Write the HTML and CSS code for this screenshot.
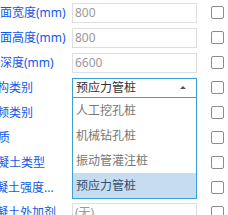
FILE: index.html
```html
<!DOCTYPE html>
<html lang="zh">

<head>
  <meta charset="UTF-8" />
  <title>桩属性</title>
  <link rel="stylesheet" href="styles.css">
</head>

<body>
  <div class="props">
    <div class="row">
      <div class="label"><span class="shift-12">截面宽度(mm)</span></div>
      <div class="field">800</div>
      <span class="check"></span>
    </div>
    <div class="row">
      <div class="label"><span class="shift-12">截面高度(mm)</span></div>
      <div class="field">800</div>
      <span class="check"></span>
    </div>
    <div class="row">
      <div class="label"><span class="shift-12">桩深度(mm)</span></div>
      <div class="field">6600</div>
      <span class="check"></span>
    </div>
    <div class="row">
      <div class="label"><span class="shift-15">结构类别</span></div>
      <div class="select">
        <div class="select-head">预应力管桩<span class="arrow"></span></div>
        <ul class="select-list">
          <li>人工挖孔桩</li>
          <li>机械钻孔桩</li>
          <li>振动管灌注桩</li>
          <li class="active">预应力管桩</li>
        </ul>
      </div>
      <span class="check"></span>
    </div>
    <div class="row">
      <div class="label"><span class="shift-15">桩频类别</span></div>
      <div class="field">不限</div>
      <span class="check"></span>
    </div>
    <div class="row">
      <div class="label"><span class="shift-14">材质</span></div>
      <div class="field">混凝土</div>
      <span class="check"></span>
    </div>
    <div class="row">
      <div class="label"><span class="shift-15">混凝土类型</span></div>
      <div class="field">普通</div>
      <span class="check"></span>
    </div>
    <div class="row">
      <div class="label"><span class="shift-16">混凝土强度...</span></div>
      <div class="field">C30</div>
      <span class="check"></span>
    </div>
    <div class="row">
      <div class="label"><span class="shift-16">混凝土外加剂</span></div>
      <div class="field">(无)</div>
      <span class="check"></span>
    </div>
  </div>
</body>

</html>
```

FILE: styles.css
```css
*,
::before,
::after {
  box-sizing: border-box;
}

html {
  font-family: 'Noto Sans', 'Noto Sans CJK SC', sans-serif;
  font-size: 12px;
}

body {
  margin: 0;
  background: #fff;
  overflow: hidden;
}

/* rows */
.row {
  display: grid;
  grid-template-columns: 72px 125px auto;
  align-items: center;
  height: 25px;
}

.label {
  overflow: hidden;
  white-space: nowrap;
  color: #1458e8;
  line-height: 20px;
}

.label span {
  display: inline-block;
}

.shift-12 { margin-left: -12px; }
.shift-14 { margin-left: -14px; }
.shift-15 { margin-left: -15px; }
.shift-16 { margin-left: -16px; }

.field {
  height: 20px;
  line-height: 18px;
  padding: 0 2px;
  border: 1px solid #dedede;
  color: #9a9a9a;
  white-space: nowrap;
  overflow: hidden;
}

.check {
  width: 13px;
  height: 13px;
  margin-left: 14px;
  border: 1px solid #8c8c8c;
  border-radius: 2px;
  background: #fff;
}

/* dropdown */
.select {
  position: relative;
  height: 20px;
}

.select-head {
  height: 20px;
  line-height: 18px;
  padding: 0 3px;
  border: 1px solid #3ca0d6;
  color: #333;
  background: #fff;
}

.arrow {
  position: absolute;
  right: 11px;
  top: 8px;
  border-left: 3px solid transparent;
  border-right: 3px solid transparent;
  border-bottom: 3px solid #555;
}

.select-list {
  position: absolute;
  left: 0;
  right: 0;
  top: 20px;
  margin: 0;
  padding: 0;
  list-style: none;
  background: #fff;
  border: 1px solid #3ca0d6;
  border-top: none;
  z-index: 2;
}

.select-list li {
  height: 25px;
  line-height: 25px;
  padding: 0 3px;
  color: #777;
}

.select-list .active {
  background: #c6dcf1;
  color: #34506e;
}
```
